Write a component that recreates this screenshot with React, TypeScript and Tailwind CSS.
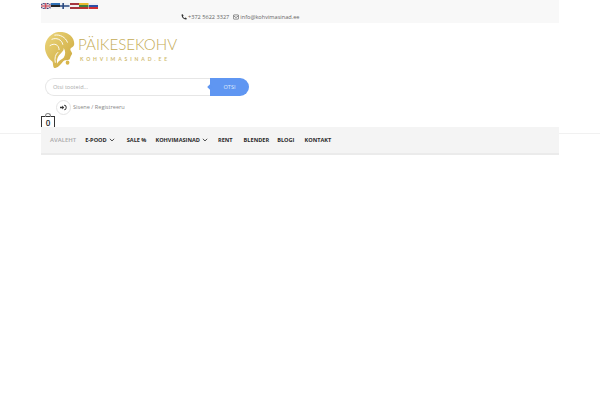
import React from "react";

const Flag = ({ c }: { c: string[] }) => (
  <svg width="9.5" height="6" viewBox="0 0 9 6" preserveAspectRatio="none" className="block">
    {c.map((f, i) => (
      <rect key={i} x="0" y={i * (6 / c.length)} width="9" height={6 / c.length} fill={f} />
    ))}
  </svg>
);

const Chevron = () => (
  <svg width="6" height="4" viewBox="0 0 7 5" fill="none" stroke="#333" strokeWidth="1.1" className="ml-[2px]">
    <path d="M0.8 1 L3.5 3.7 L6.2 1" />
  </svg>
);

const UK = () => (
  <svg width="9.5" height="6" viewBox="0 0 9 6" preserveAspectRatio="none" className="block">
    <rect width="9" height="6" fill="#3b3f78" />
    <path d="M0 0L9 6M9 0L0 6" stroke="#e8dfe2" strokeWidth="1.2" />
    <path d="M4.5 0V6M0 3H9" stroke="#e8dfe2" strokeWidth="2" />
    <path d="M4.5 0V6M0 3H9" stroke="#c8394a" strokeWidth="1" />
  </svg>
);

const Fi = () => (
  <svg width="9.5" height="6" viewBox="0 0 9 6" preserveAspectRatio="none" className="block">
    <rect width="9" height="6" fill="#eef1f5" />
    <path d="M3 0V6M0 3H9" stroke="#27477f" strokeWidth="1.5" />
  </svg>
);

const Logo = () => (
  <svg width="31" height="36" viewBox="0 0 33 34" preserveAspectRatio="none" className="block shrink-0">
    <defs>
      <linearGradient id="g" x1="0" y1="0" x2="1" y2="1">
        <stop offset="0" stopColor="#ecd67c" />
        <stop offset="1" stopColor="#cba63a" />
      </linearGradient>
    </defs>
    <path d="M14 0 C24 -1 32 5 31 12 C30 15 27 14 27 17 C28 19 30 20 28 22 C27 23 27 25 26 26 C24 27 21 26 19 28 C17 30 15 33 11 34 C8 34 9 30 8 28 C5 26 1 22 0 16 C-1 8 6 1 14 0 Z" fill="url(#g)" />
    <path d="M7 7 C12 5 18 7 19 12 M5 13 C10 10 15 12 15 17 M10 3 C16 2 22 5 24 10 M14 19 C11 21 10 25 11 29" fill="none" stroke="#fff" strokeWidth="0.9" />
    <path d="M20 15 C22 18 22 21 20 24 C18 26 14 27 13 30 C12 26 14 22 17 20 C19 18 20 17 20 15 Z" fill="#fff" />
    <circle cx="24" cy="29" r="2" fill="#d9b64c" />
  </svg>
);

const items: [string, boolean, string][] = [
  ["E-POOD", true, "mr-[12px]"],
  ["SALE %", false, "mr-[9px]"],
  ["KOHVIMASINAD", true, "mr-[10px]"],
  ["RENT", false, "mr-[11px]"],
  ["BLENDER", false, "mr-[8px]"],
  ["BLOGI", false, "mr-[10px]"],
  ["KONTAKT", false, ""],
];

export default function App() {
  return (
    <div className="relative w-[600px] h-[400px] overflow-hidden bg-white font-['Open_Sans',sans-serif]">
      <div className="absolute left-0 right-0 top-[133px] h-px bg-[#f1f1f1]" />
      <div className="relative mx-auto w-[518px] h-[155px] flex flex-col">
        {/* top bar */}
        <div className="h-[23px] shrink-0 bg-[#f8f8f8] relative">
          <div className="flex pt-[3px]">
            <UK />
            <Flag c={["#2f6fb5", "#222222", "#f0f0f0"]} />
            <Fi />
            <Flag c={["#a5343f", "#f0eef0", "#a5343f"]} />
            <Flag c={["#e8b92f", "#3f7d42", "#b8322f"]} />
            <Flag c={["#eef0f5", "#2c4fa8", "#cf2f35"]} />
          </div>
          <div className="flex items-center absolute left-[140px] top-[13px] h-[8px] text-[5.6px] leading-[8px] text-[#666]">
            <svg width="6" height="6" viewBox="0 0 10 10" className="mr-[1px]">
              <path d="M1 1 L3 0.5 L4.3 3 L3.2 4.2 C3.8 5.4 4.8 6.3 6 7 L7.2 5.8 L9.6 7 L9 9.2 C5 10 0.5 5.5 1 1 Z" fill="#333" />
            </svg>
            <span>+372 5622 3327</span>
            <svg width="6" height="6" viewBox="0 0 10 10" fill="none" stroke="#555" strokeWidth="1.1" className="ml-[4px] mr-[1px]">
              <rect x="0.7" y="1.5" width="8.6" height="7" rx="1" />
              <path d="M1 3 L5 6 L9 3" />
            </svg>
            <span>info@kohvimasinad.ee</span>
          </div>
        </div>

        {/* logo */}
        <div className="flex items-start ml-[4px] mt-[9px] h-[34px] shrink-0">
          <Logo />
          <div className="ml-[2px] flex flex-col pt-[5px]">
            <div className="font-['Lato',sans-serif] font-light text-[15.1px] leading-[15px] text-[#c4ab55] whitespace-nowrap">
              PÄIKESEKOHV
            </div>
            <div className="mt-[4px] ml-[2px] font-['Lato',sans-serif] font-bold text-[5px] leading-[6px] tracking-[2.9px] text-[#d0bb70] whitespace-nowrap">
              KOHVIMASINAD.EE
            </div>
          </div>
        </div>

        {/* search */}
        <div className="flex ml-[4px] mt-[12px] w-[204px] h-[18px] shrink-0">
          <div className="flex-1 border border-[#e6e6e6] border-r-0 rounded-l-[9px] pl-[7px] text-[5.6px] leading-[16px] text-[#aaa]">
            Otsi tooteid...
          </div>
          <div className="relative w-[39px] bg-[#5f96f2] rounded-r-[9px] text-center text-[5.6px] leading-[18px] text-[#dfe9fb]">
            <span className="absolute left-[-2px] top-[7px] w-[4px] h-[4px] rotate-45 bg-[#5f96f2]" />
            OTSI
          </div>
        </div>

        {/* login */}
        <div className="flex items-center ml-[15px] mt-[3px] h-[16px] shrink-0">
          <div className="w-[15px] h-[15px] rounded-full border border-[#e4e4e4] flex items-center justify-center">
            <svg width="7" height="7" viewBox="0 0 10 10" fill="#333">
              <path d="M0 3.8H3.2V2L6 5L3.2 8V6.2H0Z" />
              <path d="M6 1.2C8 1.2 9.5 2.6 9.5 5S8 8.8 6 8.8V7.6C7.3 7.6 8.2 6.6 8.2 5S7.3 2.4 6 2.4Z" />
            </svg>
          </div>
          <span className="ml-[2px] text-[5.6px] leading-[8px] text-[#888]">Sisene / Registreeru</span>
        </div>

        {/* cart */}
        <div className="relative mt-[1px] w-[14px] h-[11px] shrink-0 border border-[#333] border-b-0 text-center text-[8px] leading-[11px] font-semibold text-[#222]">
          <span className="absolute left-[3px] top-[-4px] w-[6px] h-[4px] border border-b-0 border-[#888] rounded-t-[3px]" />
          0
        </div>

        {/* nav */}
        <div className="h-[28px] shrink-0 bg-[#f4f4f4] border-b-2 border-[#ebebeb] flex items-center pl-[9px]">
          <span className="text-[6px] font-semibold text-[#aaa] mr-[9px]">AVALEHT</span>
          {items.map(([t, c, m]) => (
            <span key={t} className={`flex items-center text-[5.6px] font-bold text-[#2a2a2a] ${m}`}>
              {t}
              {c && <Chevron />}
            </span>
          ))}
        </div>
      </div>
    </div>
  );
}
